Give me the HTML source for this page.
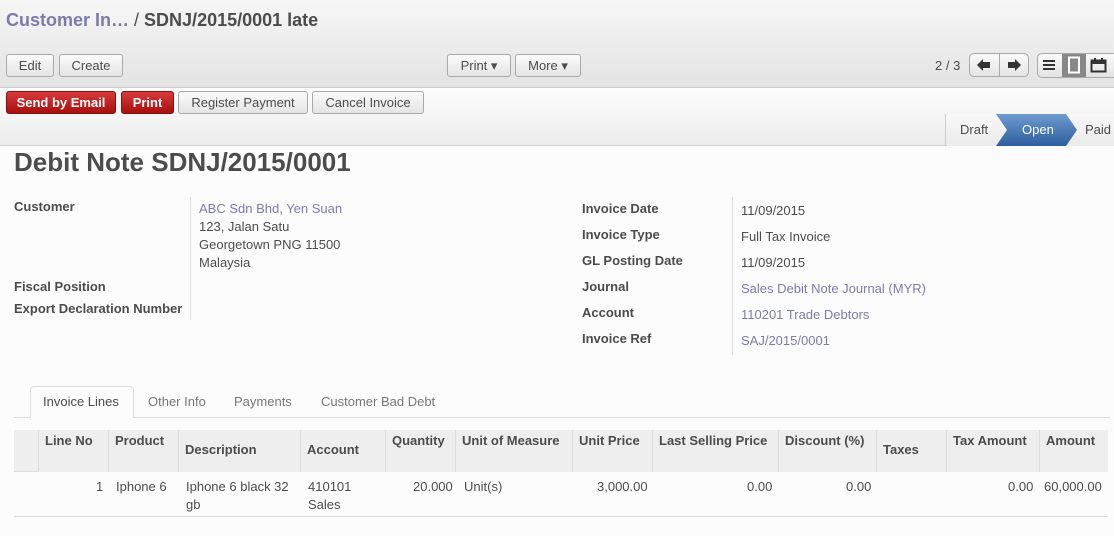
<!DOCTYPE html>
<html><head><meta charset="utf-8"><style>
*{box-sizing:border-box;margin:0;padding:0}
body{width:1114px;height:536px;overflow:hidden;background:#fcfcfc;font-family:"Liberation Sans",Arial,sans-serif;font-size:13px;color:#4c4c4c;position:relative}
.a{position:absolute;white-space:nowrap}
.top{position:absolute;left:0;top:0;width:1114px;height:88px;background:linear-gradient(#f6f6f6,#e3e3e3);border-bottom:1px solid #cacaca}
.bar{position:absolute;left:0;top:88px;width:1114px;height:58px;background:linear-gradient(#fdfdfd,#ececec);border-bottom:1px solid #d0d0d0}
.btn{position:absolute;height:23px;border:1px solid #a9a9a9;border-radius:3px;background:linear-gradient(#fbfbfb,#e4e4e4);font-size:13px;line-height:21px;text-align:center;color:#4c4c4c}
.red{background:linear-gradient(#d83a3a,#a80f0f);border-color:#8a1010;color:#fff;font-weight:bold}
.lbl{position:absolute;font-weight:bold;font-size:13px}
.val{position:absolute;font-size:13px}
.lnk{color:#7c7bad}
.hd{position:absolute;top:430px;height:42px;background:#eee;border-left:1px solid #ddd;font-weight:bold;padding:3px 6px}
.cell{position:absolute;top:478px;line-height:18px}
</style></head><body>
<div class="top"></div>
<div class="bar"></div>
<div class="a" style="left:6px;top:10px;font-size:18px;font-weight:bold;color:#7c7bad">Customer In… <span style="color:#4c4c4c;font-weight:normal">/</span> <span style="color:#4c4c4c">SDNJ/2015/0001 late</span></div>
<div class="btn" style="left:6px;top:54px;width:48px">Edit</div>
<div class="btn" style="left:59px;top:54px;width:64px">Create</div>
<div class="btn" style="left:447px;top:54px;width:64px">Print ▾</div>
<div class="btn" style="left:515px;top:54px;width:66px">More ▾</div>
<div class="a" style="left:935px;top:58px;font-size:13px">2 / 3</div>
<div class="btn" style="left:969px;top:53px;width:60px;height:24px;border-radius:5px"></div>
<div class="a" style="left:999px;top:54px;width:1px;height:23px;background:#aaa"></div>
<svg class="a" style="left:977px;top:59px" width="14" height="12"><path d="M0 6L6 0V3H13V9H6V12Z" fill="#333"/></svg>
<svg class="a" style="left:1007px;top:59px" width="14" height="12"><path d="M14 6L8 0V3H1V9H8V12Z" fill="#333"/></svg>
<div class="btn" style="left:1037px;top:53px;width:90px;height:25px;border-radius:5px"></div>
<div class="a" style="left:1062px;top:54px;width:24px;height:23px;background:#888"></div>
<svg class="a" style="left:1042px;top:59px" width="14" height="12"><path d="M1 2H13M1 6H13M1 10H13" stroke="#333" stroke-width="2"/></svg>
<svg class="a" style="left:1066px;top:56px" width="16" height="18"><rect x="3" y="1.5" width="10" height="15" fill="none" stroke="#fff" stroke-width="2"/></svg>
<svg class="a" style="left:1090px;top:57px" width="17" height="16"><rect x="1.5" y="3.5" width="14" height="11" fill="none" stroke="#333" stroke-width="2"/><rect x="1" y="3" width="15" height="4" fill="#333"/><path d="M5 1V5M12 1V5" stroke="#333" stroke-width="2"/></svg>
<div class="btn red" style="left:6px;top:91px;width:110px">Send by Email</div>
<div class="btn red" style="left:121px;top:91px;width:53px">Print</div>
<div class="btn" style="left:178px;top:91px;width:130px">Register Payment</div>
<div class="btn" style="left:312px;top:91px;width:112px">Cancel Invoice</div>
<div class="a" style="left:945px;top:114px;width:169px;height:32px;background:linear-gradient(#f8f8f8,#ebebeb);border-left:1px solid #ccc"></div>
<svg class="a" style="left:996px;top:114px" width="85" height="32"><defs><linearGradient id="g" x1="0" y1="0" x2="0" y2="1"><stop offset="0" stop-color="#6d9ad0"/><stop offset="1" stop-color="#2d5e9e"/></linearGradient></defs><path d="M0 0H70L81 16L70 32H0L11 16Z" fill="url(#g)"/></svg>
<div class="a" style="left:960px;top:122px;font-size:13px">Draft</div>
<div class="a" style="left:1022px;top:122px;font-size:13px;color:#fff">Open</div>
<div class="a" style="left:1085px;top:122px;font-size:13px">Paid</div>
<div class="a" style="left:14px;top:147px;font-size:26px;font-weight:bold;color:#4c4c4c">Debit Note SDNJ/2015/0001</div>
<div class="lbl" style="left:14px;top:199px">Customer</div>
<div class="lbl" style="left:14px;top:279px">Fiscal Position</div>
<div class="lbl" style="left:14px;top:301px">Export Declaration Number</div>
<div class="a" style="left:190px;top:197px;width:1px;height:123px;background:#ddd"></div>
<div class="val lnk" style="left:199px;top:201px">ABC Sdn Bhd, Yen Suan</div>
<div class="val" style="left:199px;top:219px">123, Jalan Satu</div>
<div class="val" style="left:199px;top:237px">Georgetown PNG 11500</div>
<div class="val" style="left:199px;top:255px">Malaysia</div>
<div class="a" style="left:732px;top:197px;width:1px;height:158px;background:#ddd"></div>
<div class="lbl" style="left:582px;top:201px">Invoice Date</div><div class="val" style="left:741px;top:203px">11/09/2015</div>
<div class="lbl" style="left:582px;top:227px">Invoice Type</div><div class="val" style="left:741px;top:229px">Full Tax Invoice</div>
<div class="lbl" style="left:582px;top:253px">GL Posting Date</div><div class="val" style="left:741px;top:255px">11/09/2015</div>
<div class="lbl" style="left:582px;top:279px">Journal</div><div class="val lnk" style="left:741px;top:281px">Sales Debit Note Journal (MYR)</div>
<div class="lbl" style="left:582px;top:305px">Account</div><div class="val lnk" style="left:741px;top:307px">110201 Trade Debtors</div>
<div class="lbl" style="left:582px;top:331px">Invoice Ref</div><div class="val lnk" style="left:741px;top:333px">SAJ/2015/0001</div>
<div class="a" style="left:14px;top:417px;width:1096px;height:1px;background:#ddd"></div>
<div class="a" style="left:30px;top:386px;width:104px;height:32px;background:#fcfcfc;border:1px solid #ddd;border-bottom:none;border-radius:4px 4px 0 0"></div>
<div class="a" style="left:43px;top:394px">Invoice Lines</div>
<div class="a" style="left:148px;top:394px;color:#777">Other Info</div>
<div class="a" style="left:234px;top:394px;color:#777">Payments</div>
<div class="a" style="left:321px;top:394px;color:#777">Customer Bad Debt</div>
<div class="a" style="left:14px;top:430px;width:1094px;height:42px;background:#eee;border-bottom:1px solid #ddd"></div>
<div class="hd" style="left:38px;width:70px">Line No</div>
<div class="hd" style="left:108px;width:70px">Product</div>
<div class="hd" style="left:178px;width:122px;padding-top:12px">Description</div>
<div class="hd" style="left:300px;width:85px;padding-top:12px">Account</div>
<div class="hd" style="left:385px;width:70px">Quantity</div>
<div class="hd" style="left:455px;width:117px">Unit of Measure</div>
<div class="hd" style="left:572px;width:80px">Unit Price</div>
<div class="hd" style="left:652px;width:126px">Last Selling Price</div>
<div class="hd" style="left:778px;width:98px">Discount (%)</div>
<div class="hd" style="left:876px;width:70px;padding-top:12px">Taxes</div>
<div class="hd" style="left:946px;width:93px">Tax Amount</div>
<div class="hd" style="left:1039px;width:69px">Amount</div>
<div class="cell" style="left:96px">1</div>
<div class="cell" style="left:116px">Iphone 6</div>
<div class="cell" style="left:186px">Iphone 6 black 32<br>gb</div>
<div class="cell" style="left:308px">410101<br>Sales</div>
<div class="cell" style="left:413px">20.000</div>
<div class="cell" style="left:464px">Unit(s)</div>
<div class="cell" style="left:597px">3,000.00</div>
<div class="cell" style="left:747px">0.00</div>
<div class="cell" style="left:846px">0.00</div>
<div class="cell" style="left:1008px">0.00</div>
<div class="cell" style="left:1044px">60,000.00</div>
<div class="a" style="left:14px;top:516px;width:1094px;height:1px;background:#ddd"></div>
</body></html>
